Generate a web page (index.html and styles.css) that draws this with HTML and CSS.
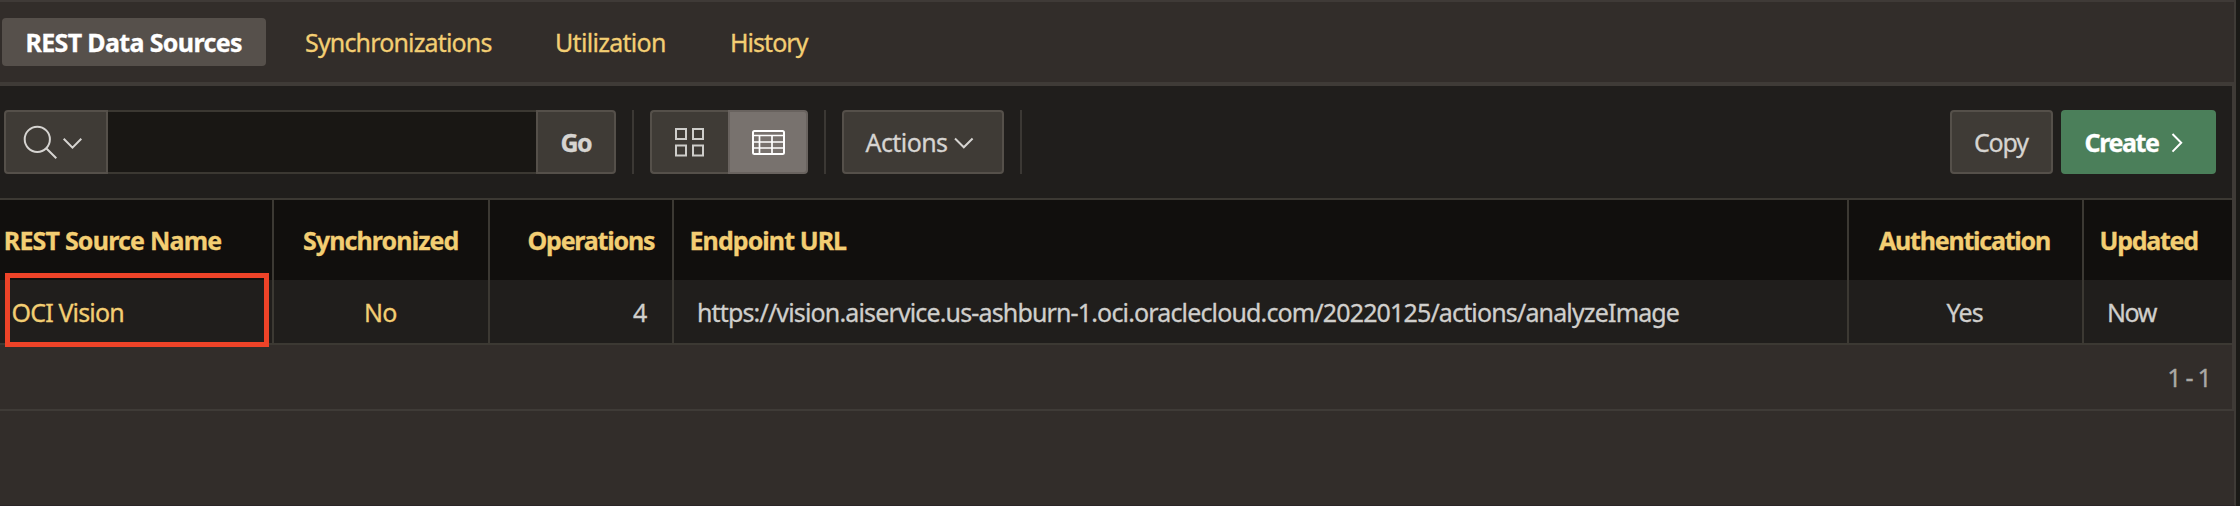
FILE: index.html
```
<!DOCTYPE html>
<html lang="en">
<head>
<meta charset="utf-8">
<title>REST Data Sources</title>
<link rel="stylesheet" href="styles.css">
</head>
<body>
<div class="page">
  <nav class="tabs">
    <a class="tab tab-active">REST Data Sources</a>
    <a class="tab tab-sync">Synchronizations</a>
    <a class="tab tab-util">Utilization</a>
    <a class="tab tab-history">History</a>
  </nav>
  <main class="region">
    <div class="toolbar">
      <div class="search">
        <button class="btn search-menu" aria-label="Search columns">
          <svg width="56" height="36" viewBox="0 0 56 36" fill="none" stroke="#d6d4d1" stroke-width="2">
            <circle cx="15.3" cy="15.3" r="12.6"/><path d="M24.2 24.2L34.300 34.300M41.700 14.800L50.500 23.600L59.300 14.800"/>
          </svg>
        </button>
        <div class="search-field"></div>
        <button class="btn go">Go</button>
      </div>
      <span class="sep"></span>
      <div class="views">
        <button class="btn view-icons" aria-label="Icons">
          <svg width="30" height="28" viewBox="0 0 30 28" fill="none" stroke="#cecdca" stroke-width="2">
            <path d="M1 1h10v10H1zM18 1h10v10H18zM1 17.500h10v10H1zM18 17.500h10v10H18z"/>
          </svg>
        </button>
        <button class="btn view-report" aria-label="Report">
          <svg width="34" height="24" viewBox="0 0 34 24" fill="none" stroke="#fff" stroke-width="2">
            <rect x="1" y="1" width="31" height="23" rx="1.500"/>
            <path d="M1 5.500h31M1 12h31M1 18h31M7.500 5.500v19M20 5.500v19" stroke-width="1.700"/>
          </svg>
        </button>
      </div>
      <span class="sep"></span>
      <button class="btn actions">Actions
        <svg width="20" height="13" viewBox="0 0 20 13" fill="none" stroke="#d6d4d1" stroke-width="2"><path d="M1 2.500L9.800 11.300L18.600 2.500"/></svg>
      </button>
      <span class="sep"></span>
      <button class="btn copy">Copy</button>
      <button class="btn create">Create
        <svg width="14" height="19" viewBox="0 0 14 19" fill="none" stroke="#fff" stroke-width="2"><path d="M1.500 1L10.200 9.800L1.500 18.600"/></svg>
      </button>
    </div>
    <div class="report">
      <div class="row head">
        <div class="cell h-name">REST Source Name</div>
        <div class="cell h-sync">Synchronized</div>
        <div class="cell h-ops">Operations</div>
        <div class="cell h-url">Endpoint URL</div>
        <div class="cell h-auth">Authentication</div>
        <div class="cell h-updated">Updated</div>
      </div>
      <div class="row data">
        <div class="cell d-name"><a>OCI Vision</a><span class="highlight"></span></div>
        <div class="cell d-sync"><a>No</a></div>
        <div class="cell d-ops">4</div>
        <div class="cell d-url">https://vision.aiservice.us-ashburn-1.oci.oraclecloud.com/20220125/actions/analyzeImage</div>
        <div class="cell d-auth">Yes</div>
        <div class="cell d-updated">Now</div>
      </div>
    </div>
    <footer class="pagination">1 - 1</footer>
  </main>
</div>
</body>
</html>
```
FILE: styles.css
```
* { box-sizing: border-box; }

body {
  margin: 0;
  background: #1b1a17;
  font: 25px "Noto Sans", "Open Sans", sans-serif;
  letter-spacing: -0.85px;
  -webkit-text-stroke: 0.3px currentColor;
  color: #d0cfcc;
  overflow: hidden;
}

.page {
  width: 2236px;
  height: 506px;
  background: #322d2a;
  border-top: 2px solid #3f3a37;
  border-right: 2px solid #3f3b37;
  border-bottom: 1px solid #2b2527;
}

svg { display: block; flex: none; overflow: visible; }

.tabs {
  display: flex;
  align-items: center;
  height: 80px;
  padding-left: 2px;
  color: #f3ce73;
}
.tab { white-space: nowrap; }
.tab-active {
  width: 264px;
  height: 48px;
  line-height: 48px;
  padding-left: 23.5px;
  border-radius: 4px;
  background: #56504b;
  color: #fff;
  font-weight: 700;
  letter-spacing: -0.65px;
}
.tab-sync { width: 250px; margin-left: 39px; letter-spacing: -0.84px; }
.tab-util { width: 175px; letter-spacing: -0.7px; }
.tab-history { letter-spacing: -0.95px; }

.region {
  border: solid #3f3b37;
  border-width: 4px 2px 2px 0;
  width: 2234px;
  height: 329px;
  background: #201e1c;
}

.toolbar {
  display: flex;
  height: 112px;
  padding: 24px 16px 24px 4px;
}
.btn {
  display: flex;
  align-items: center;
  height: 64px;
  margin: 0;
  padding: 0;
  border: 2px solid #55504a;
  border-radius: 4px;
  background: #3f3b36;
  color: #d6d4d1;
  font: inherit;
}
.search { display: flex; width: 612px; }
.search-menu { width: 104px; padding-left: 15.7px; border-radius: 4px 0 0 4px; }
.search-field {
  width: 428px;
  background: #191714;
  border: solid #3b3832;
  border-width: 2px 0;
}
.go {
  width: 80px;
  padding-left: 22.5px;
  border-radius: 0 4px 4px 0;
  font-weight: 700;
  letter-spacing: -1.6px;
}
.sep { width: 2px; height: 64px; margin: 0 16px; background: #3b3834; }
.views { display: flex; width: 158px; }
.view-icons {
  width: 78px;
  padding-left: 23px;
  border-right: 0;
  border-radius: 4px 0 0 4px;
}
.view-report {
  width: 80px;
  padding-left: 21.5px;
  border-color: #69635f;
  border-radius: 0 4px 4px 0;
  background: #78726e;
}
.actions { gap: 7px; width: 162px; padding-left: 21.5px; letter-spacing: -0.58px; }
.copy { width: 103px; margin-left: auto; padding-left: 22px; letter-spacing: -1.2px; }
.create {
  gap: 12px;
  width: 155px;
  margin-left: 8px;
  padding-left: 21.5px;
  border-color: #4b7f5a;
  background: #4b7f5a;
  color: #fff;
  font-weight: 700;
  letter-spacing: -1.4px;
}

.report { border: solid #3c3933; border-width: 2px 0; }
.row {
  display: grid;
  grid-template-columns: 274px 216px 184px 1175px 235px 1fr;
}
.cell {
  display: flex;
  align-items: center;
  border-right: 2px solid #3c3933;
  white-space: nowrap;
}
.cell:last-child { border-right: 0; }
.head { height: 80px; background: #110f0d; color: #f3ce73; font-weight: 700; }
.data { height: 63px; background: #201e1c; }
.data a { color: #f3ce73; }

.h-name { padding-left: 3.8px; letter-spacing: -0.8px; }
.h-sync { padding-left: 29px; letter-spacing: -0.92px; }
.h-ops { padding-left: 37.5px; letter-spacing: -1.21px; }
.h-url { padding-left: 15.5px; letter-spacing: -0.93px; }
.h-auth { padding-left: 30px; letter-spacing: -1.23px; }
.h-updated { padding-left: 15.5px; letter-spacing: -1.25px; }

.d-name { position: relative; padding-left: 11.5px; }
.highlight {
  position: absolute;
  left: 5px;
  top: -7px;
  width: 264px;
  height: 74px;
  border: 5px solid #ee4328;
}
.d-sync { padding-left: 90px; }
.d-ops { padding-left: 143px; }
.d-url { padding-left: 23px; }
.d-auth { padding-left: 97.5px; }
.d-updated { padding-left: 23px; letter-spacing: -1.5px; }

.pagination {
  height: 64px;
  line-height: 64px;
  padding-right: 21.5px;
  background: #322d2a;
  color: #aaa8a4;
  text-align: right;
  letter-spacing: -1.3px;
}
```
